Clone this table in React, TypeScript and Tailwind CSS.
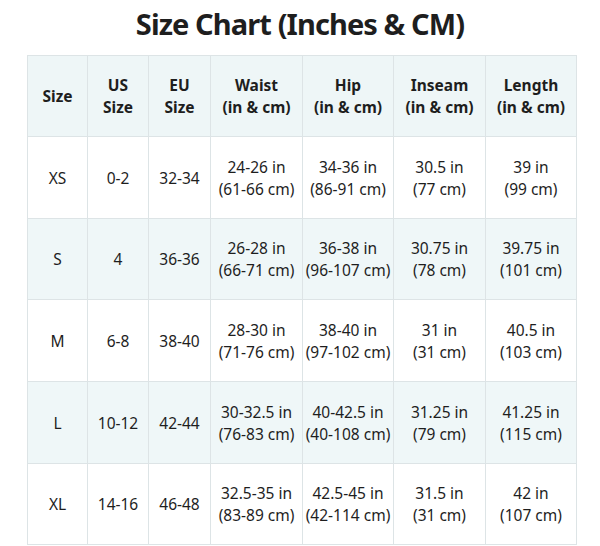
const headers = [
  ['Size'],
  ['US', 'Size'],
  ['EU', 'Size'],
  ['Waist', '(in & cm)'],
  ['Hip', '(in & cm)'],
  ['Inseam', '(in & cm)'],
  ['Length', '(in & cm)'],
]

const rows = [
  ['XS', '0-2', '32-34', ['24-26 in', '(61-66 cm)'], ['34-36 in', '(86-91 cm)'], ['30.5 in', '(77 cm)'], ['39 in', '(99 cm)']],
  ['S', '4', '36-36', ['26-28 in', '(66-71 cm)'], ['36-38 in', '(96-107 cm)'], ['30.75 in', '(78 cm)'], ['39.75 in', '(101 cm)']],
  ['M', '6-8', '38-40', ['28-30 in', '(71-76 cm)'], ['38-40 in', '(97-102 cm)'], ['31 in', '(31 cm)'], ['40.5 in', '(103 cm)']],
  ['L', '10-12', '42-44', ['30-32.5 in', '(76-83 cm)'], ['40-42.5 in', '(40-108 cm)'], ['31.25 in', '(79 cm)'], ['41.25 in', '(115 cm)']],
  ['XL', '14-16', '46-48', ['32.5-35 in', '(83-89 cm)'], ['42.5-45 in', '(42-114 cm)'], ['31.5 in', '(31 cm)'], ['42 in', '(107 cm)']],
] as const

const widths = ['w-[60px]', 'w-[61px]', 'w-[62px]', 'w-[92px]', 'w-[91px]', 'w-[92px]', 'w-[91px]']
const heights = ['h-[82px]', 'h-[81px]', 'h-[82px]', 'h-[82px]', 'h-[81px]']

export default function App() {
  return (
    <div className="w-[600px] h-[546px] bg-white text-[#1e1e1e] font-['Noto_Sans',sans-serif] overflow-hidden">
      <h1 className="h-[55px] pt-[2px] text-center text-[29px] leading-[44px] font-bold tracking-[-0.9px]">
        Size Chart (Inches &amp; CM)
      </h1>
      <table className="ml-[27px] border-collapse table-fixed w-[549px] text-[15.5px] leading-[22px]">
        <thead>
          <tr className="h-[81px] bg-[#eef6f7]">
            {headers.map((h, i) => (
              <th key={i} className={`${widths[i]} border border-[#dde4e6] font-bold text-center align-middle p-0`}>
                {h.map((line, j) => (
                  <div key={j}>{line}</div>
                ))}
              </th>
            ))}
          </tr>
        </thead>
        <tbody>
          {rows.map((r, ri) => (
            <tr key={ri} className={`${heights[ri]} ${ri % 2 === 1 ? 'bg-[#eff7f8]' : 'bg-white'}`}>
              {r.map((c, ci) => (
                <td key={ci} className="border border-[#dde4e6] text-center align-middle p-0 whitespace-nowrap">
                  {typeof c === 'string' ? c : c.map((line, j) => <div key={j}>{line}</div>)}
                </td>
              ))}
            </tr>
          ))}
        </tbody>
      </table>
    </div>
  )
}
